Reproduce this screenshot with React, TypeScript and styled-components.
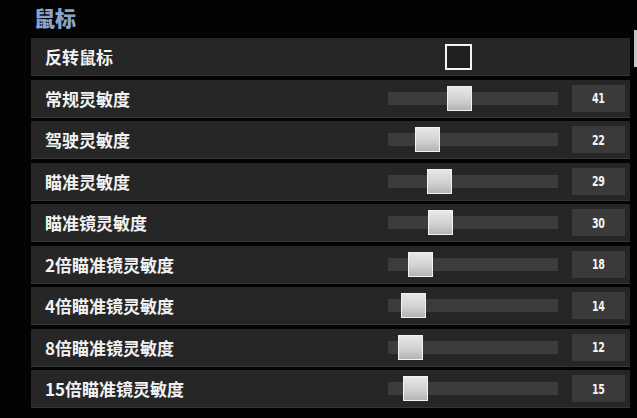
import styled, { createGlobalStyle } from 'styled-components';

type Sensitivity = { label: string; value: number };

const sensitivities: Sensitivity[] = [
  { label: '常规灵敏度', value: 41 },
  { label: '驾驶灵敏度', value: 22 },
  { label: '瞄准灵敏度', value: 29 },
  { label: '瞄准镜灵敏度', value: 30 },
  { label: '2倍瞄准镜灵敏度', value: 18 },
  { label: '4倍瞄准镜灵敏度', value: 14 },
  { label: '8倍瞄准镜灵敏度', value: 12 },
  { label: '15倍瞄准镜灵敏度', value: 15 },
];

// thumb offset inside the track for a given sensitivity value
const thumbOffset = (value: number) => value * 1.7 - 10.7;

export default function App() {
  return (
    <>
      <GlobalStyle />
      <Frame>
        <Panel>
          <Title>鼠标</Title>
          <List>
            <Row>
              <Label>反转鼠标</Label>
              <Control>
                <Checkbox />
              </Control>
            </Row>
            {sensitivities.map(({ label, value }) => (
              <Row key={label}>
                <Label>{label}</Label>
                <Control>
                  <Track>
                    <Thumb style={{ left: thumbOffset(value) }} />
                  </Track>
                </Control>
                <ValueBox>
                  <ValueText>{value}</ValueText>
                </ValueBox>
              </Row>
            ))}
          </List>
        </Panel>
        <ScrollTrack>
          <ScrollThumb />
        </ScrollTrack>
      </Frame>
    </>
  );
}

const GlobalStyle = createGlobalStyle`
  html, body {
    margin: 0;
    background: #030303;
  }
  body {
    font-family: 'Noto Sans CJK SC', 'Noto Sans', sans-serif;
  }
`;

const Frame = styled('div')`
  width: 637px;
  height: 418px;
  display: flex;
  overflow: hidden;
`;

const Panel = styled('div')`
  flex: 1;
  padding-left: 31px;
  padding-right: 4px;
  display: flex;
  flex-direction: column;
`;

const Title = styled('h2')`
  margin: 0 0 0 3px;
  height: 38px;
  font-size: 21px;
  line-height: 34px;
  font-weight: 900;
  color: #8ba5c8;
`;

const List = styled('div')`
  display: flex;
  flex-direction: column;
  gap: 3.5px;
`;

const Row = styled('div')`
  height: 38px;
  box-sizing: border-box;
  display: grid;
  grid-template-columns: 1fr 170px 53px;
  column-gap: 14px;
  align-items: center;
  padding: 0 5px 0 14px;
  background: #262626;
  border-bottom: 1px solid #363636;
`;

const Label = styled('span')`
  font-size: 17px;
  font-weight: 700;
  color: #f2f2f2;
  white-space: nowrap;
`;

const Control = styled('div')`
  display: flex;
  align-items: center;
`;

const Checkbox = styled('div')`
  width: 27px;
  height: 26px;
  box-sizing: border-box;
  margin-left: 57px;
  border: 2px solid #f4f4f4;
  background: #202020;
`;

const Track = styled('div')`
  position: relative;
  width: 170px;
  height: 13px;
  background: #3c3c3c;
`;

const Thumb = styled('div')`
  position: absolute;
  top: -6px;
  width: 25px;
  height: 25px;
  box-sizing: border-box;
  border: 1px solid #f2f2f2;
  background: linear-gradient(180deg, #e8e8e8 0%, #cfcfcf 60%, #b4b4b4 100%);
`;

const ValueBox = styled('div')`
  height: 27px;
  display: flex;
  align-items: center;
  justify-content: center;
  background: #3a3a3a;
`;

const ValueText = styled('span')`
  display: inline-block;
  transform: scaleX(0.68);
  color: #f4f4f4;
  font-family: 'DejaVu Sans', 'Liberation Sans', sans-serif;
  font-size: 14px;
  font-weight: 700;
  letter-spacing: -0.5px;
`;

const ScrollTrack = styled('div')`
  width: 3px;
  padding-top: 30px;
`;

const ScrollThumb = styled('div')`
  height: 37px;
  background: #c6c6c6;
`;
